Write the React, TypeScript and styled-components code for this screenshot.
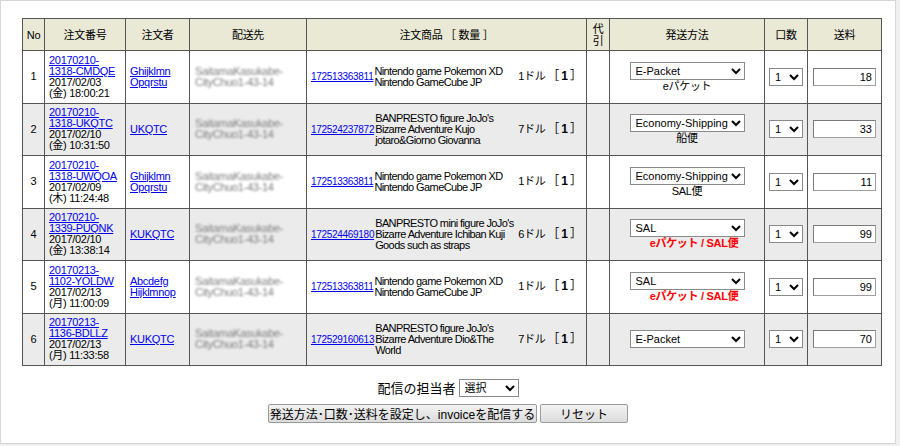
import React from 'react'
import styled, { createGlobalStyle } from 'styled-components'

const GlobalStyle = createGlobalStyle`
  body {
    margin: 0;
    background: #f0f0f0;
    font-family: "Liberation Sans", "Noto Sans CJK JP", sans-serif;
    font-size: 11px;
    color: #000;
  }
`

const Frame = styled.div`
  width: 896px;
  height: 444px;
  box-sizing: border-box;
  border: 1px solid #d6d6d6;
  background: #fff;
  padding: 17px 0 0 21px;
`

const Table = styled.table`
  width: 859px;
  border-collapse: collapse;
  table-layout: fixed;
  letter-spacing: -0.3px;
`

const Th = styled.th`
  height: 31px;
  padding: 0;
  background: #e9e9d5;
  border: 1px solid #555;
  font-weight: normal;
  font-size: 11px;
  text-align: center;
  vertical-align: middle;
  line-height: 12px;
`

const Row = styled.tr<{ $alt: boolean }>`
  height: 52.5px;
  background: ${p => (p.$alt ? '#ebebeb' : '#fff')};
`

const Td = styled.td<{ $align?: string }>`
  border: 1px solid #555;
  padding: 0 4px;
  vertical-align: middle;
  text-align: ${p => p.$align || 'left'};
  line-height: 11px;
  overflow: hidden;
`

const Link = styled.a`
  color: #0000ee;
  text-decoration: underline;
  cursor: pointer;
`

const ItemLink = styled(Link)`
  flex-shrink: 0;
  font-size: 10px;
  letter-spacing: -0.3px;
  white-space: nowrap;
`

const OrderCell = styled.div`
  display: flex;
  flex-direction: column;
  white-space: nowrap;
`

const Blurred = styled.div`
  color: #7e7e7e;
  filter: blur(1.3px);
  white-space: nowrap;
  padding-left: 1px;
`

const ItemLine = styled.div`
  display: flex;
  align-items: center;
`

const ItemName = styled.div`
  flex: 1;
  min-width: 0;
  white-space: nowrap;
  letter-spacing: -0.6px;
  padding-left: 1px;
`

const Price = styled.span`
  flex-shrink: 0;
  width: 29px;
  white-space: nowrap;
`

const Qty = styled.span`
  flex-shrink: 0;
  white-space: nowrap;
  font-size: 12px;
  letter-spacing: 0;
  b {
    padding: 0 2px;
  }
`

const ShipCell = styled.div`
  display: flex;
  flex-direction: column;
  align-items: center;
`

const Select = styled.select<{ $w: number }>`
  width: ${p => p.$w}px;
  height: 18px;
  font-size: 11px;
  font-family: "Liberation Sans", "Noto Sans CJK JP", sans-serif;
  padding: 0 0 0 1px;
  margin: 0;
  border: 1px solid #8a8a8a;
  border-radius: 0;
  background: #fff;
  color: #000;
`

const Note = styled.div<{ $warn?: boolean }>`
  margin-top: 1px;
  color: ${p => (p.$warn ? '#ff0000' : '#000')};
  font-weight: ${p => (p.$warn ? 'bold' : 'normal')};
  padding-left: ${p => (p.$warn ? '14px' : '0')};
  white-space: nowrap;
`

const Fee = styled.input`
  width: 63px;
  height: 18px;
  box-sizing: border-box;
  margin-left: 1px;
  padding: 0 3px;
  text-align: right;
  font-size: 11px;
  font-family: "Liberation Sans", sans-serif;
  border: 1px solid #a0a0a0;
  border-top-color: #7a7a7a;
  border-left-color: #7a7a7a;
`

const Footer = styled.div`
  display: flex;
  flex-direction: column;
  align-items: center;
  gap: 7px;
  margin: 12px 0 0 -21px;
  font-size: 13px;
`

const Assignee = styled.div`
  display: flex;
  align-items: center;
  gap: 3px;
`

const Buttons = styled.div`
  display: flex;
  gap: 3px;
`

const Button = styled.button<{ $w: number }>`
  width: ${p => p.$w}px;
  height: 19px;
  padding: 0;
  font-size: 12px;
  font-family: "Liberation Sans", "Noto Sans CJK JP", sans-serif;
  color: #000;
  border: 1px solid #9a9a9a;
  border-radius: 2px;
  background: linear-gradient(#f2f2f2, #dcdcdc);
  cursor: pointer;
`

type Order = {
  no: number
  id: [string, string]
  date: string
  time: string
  buyer: string[]
  item: string
  name: string[]
  price: string
  ship: string
  note?: string
  warn?: boolean
  fee: number
}

const orders: Order[] = [
  {
    no: 1,
    id: ['20170210-', '1318-CMDQE'],
    date: '2017/02/03',
    time: '(金) 18:00:21',
    buyer: ['Ghijklmn', 'Opqrstu'],
    item: '172513363811',
    name: ['Nintendo game Pokemon XD', 'Nintendo GameCube JP'],
    price: '1ドル',
    ship: 'E-Packet',
    note: 'eパケット',
    fee: 18,
  },
  {
    no: 2,
    id: ['20170210-', '1318-UKQTC'],
    date: '2017/02/10',
    time: '(金) 10:31:50',
    buyer: ['UKQTC'],
    item: '172524237872',
    name: ['BANPRESTO figure JoJo\'s', 'Bizarre Adventure Kujo', 'jotaro&Giorno Giovanna'],
    price: '7ドル',
    ship: 'Economy-Shipping',
    note: '船便',
    fee: 33,
  },
  {
    no: 3,
    id: ['20170210-', '1318-UWQOA'],
    date: '2017/02/09',
    time: '(木) 11:24:48',
    buyer: ['Ghijklmn', 'Opqrstu'],
    item: '172513363811',
    name: ['Nintendo game Pokemon XD', 'Nintendo GameCube JP'],
    price: '1ドル',
    ship: 'Economy-Shipping',
    note: 'SAL便',
    fee: 11,
  },
  {
    no: 4,
    id: ['20170210-', '1339-PUQNK'],
    date: '2017/02/10',
    time: '(金) 13:38:14',
    buyer: ['KUKQTC'],
    item: '172524469180',
    name: ['BANPRESTO mini figure JoJo\'s', 'Bizarre Adventure Ichiban Kuji', 'Goods such as straps'],
    price: '6ドル',
    ship: 'SAL',
    note: 'eパケット / SAL便',
    warn: true,
    fee: 99,
  },
  {
    no: 5,
    id: ['20170213-', '1102-YOLDW'],
    date: '2017/02/13',
    time: '(月) 11:00:09',
    buyer: ['Abcdefg', 'Hijklmnop'],
    item: '172513363811',
    name: ['Nintendo game Pokemon XD', 'Nintendo GameCube JP'],
    price: '1ドル',
    ship: 'SAL',
    note: 'eパケット / SAL便',
    warn: true,
    fee: 99,
  },
  {
    no: 6,
    id: ['20170213-', '1136-BDLLZ'],
    date: '2017/02/13',
    time: '(月) 11:33:58',
    buyer: ['KUKQTC'],
    item: '172529160613',
    name: ['BANPRESTO figure JoJo\'s', 'Bizarre Adventure Dio&The', 'World'],
    price: '7ドル',
    ship: 'E-Packet',
    fee: 70,
  },
]

const methods = ['E-Packet', 'Economy-Shipping', 'SAL']

const App: React.FC = () => {
  return (
    <>
      <GlobalStyle />
      <Frame>
        <Table>
          <colgroup>
            <col style={{ width: 22 }} />
            <col style={{ width: 81 }} />
            <col style={{ width: 64 }} />
            <col style={{ width: 117 }} />
            <col style={{ width: 280 }} />
            <col style={{ width: 23 }} />
            <col style={{ width: 155 }} />
            <col style={{ width: 43 }} />
            <col style={{ width: 74 }} />
          </colgroup>
          <thead>
            <tr>
              <Th>No</Th>
              <Th>注文番号</Th>
              <Th>注文者</Th>
              <Th>配送先</Th>
              <Th>注文商品 ［ 数量 ］</Th>
              <Th>
                代<br />引
              </Th>
              <Th>発送方法</Th>
              <Th>口数</Th>
              <Th>送料</Th>
            </tr>
          </thead>
          <tbody>
            {orders.map(o => (
              <Row key={o.no} $alt={o.no % 2 === 0}>
                <Td $align="center">{o.no}</Td>
                <Td>
                  <OrderCell>
                    <Link>
                      {o.id[0]}
                      <br />
                      {o.id[1]}
                    </Link>
                    <span>{o.date}</span>
                    <span>{o.time}</span>
                  </OrderCell>
                </Td>
                <Td>
                  <Link>
                    {o.buyer.map((b, i) => (
                      <React.Fragment key={i}>
                        {i > 0 && <br />}
                        {b}
                      </React.Fragment>
                    ))}
                  </Link>
                </Td>
                <Td>
                  <Blurred>
                    SaitamaKasukabe-
                    <br />
                    CityChuo1-43-14
                  </Blurred>
                </Td>
                <Td>
                  <ItemLine>
                    <ItemLink>{o.item}</ItemLink>
                    <ItemName>
                      {o.name.map((n, i) => (
                        <div key={i}>{n}</div>
                      ))}
                    </ItemName>
                    <Price>{o.price}</Price>
                    <Qty>
                      ［<b>1</b>］
                    </Qty>
                  </ItemLine>
                </Td>
                <Td />
                <Td>
                  <ShipCell>
                    <Select $w={115} defaultValue={o.ship}>
                      {methods.map(m => (
                        <option key={m}>{m}</option>
                      ))}
                    </Select>
                    {o.note && <Note $warn={o.warn}>{o.note}</Note>}
                  </ShipCell>
                </Td>
                <Td>
                  <Select $w={34} defaultValue="1">
                    <option>1</option>
                    <option>2</option>
                    <option>3</option>
                  </Select>
                </Td>
                <Td>
                  <Fee defaultValue={o.fee} />
                </Td>
              </Row>
            ))}
          </tbody>
        </Table>
        <Footer>
          <Assignee>
            配信の担当者
            <Select $w={60} defaultValue="選択">
              <option>選択</option>
            </Select>
          </Assignee>
          <Buttons>
            <Button $w={269}>発送方法･口数･送料を設定し、invoiceを配信する</Button>
            <Button $w={88}>リセット</Button>
          </Buttons>
        </Footer>
      </Frame>
    </>
  )
}

export default App
